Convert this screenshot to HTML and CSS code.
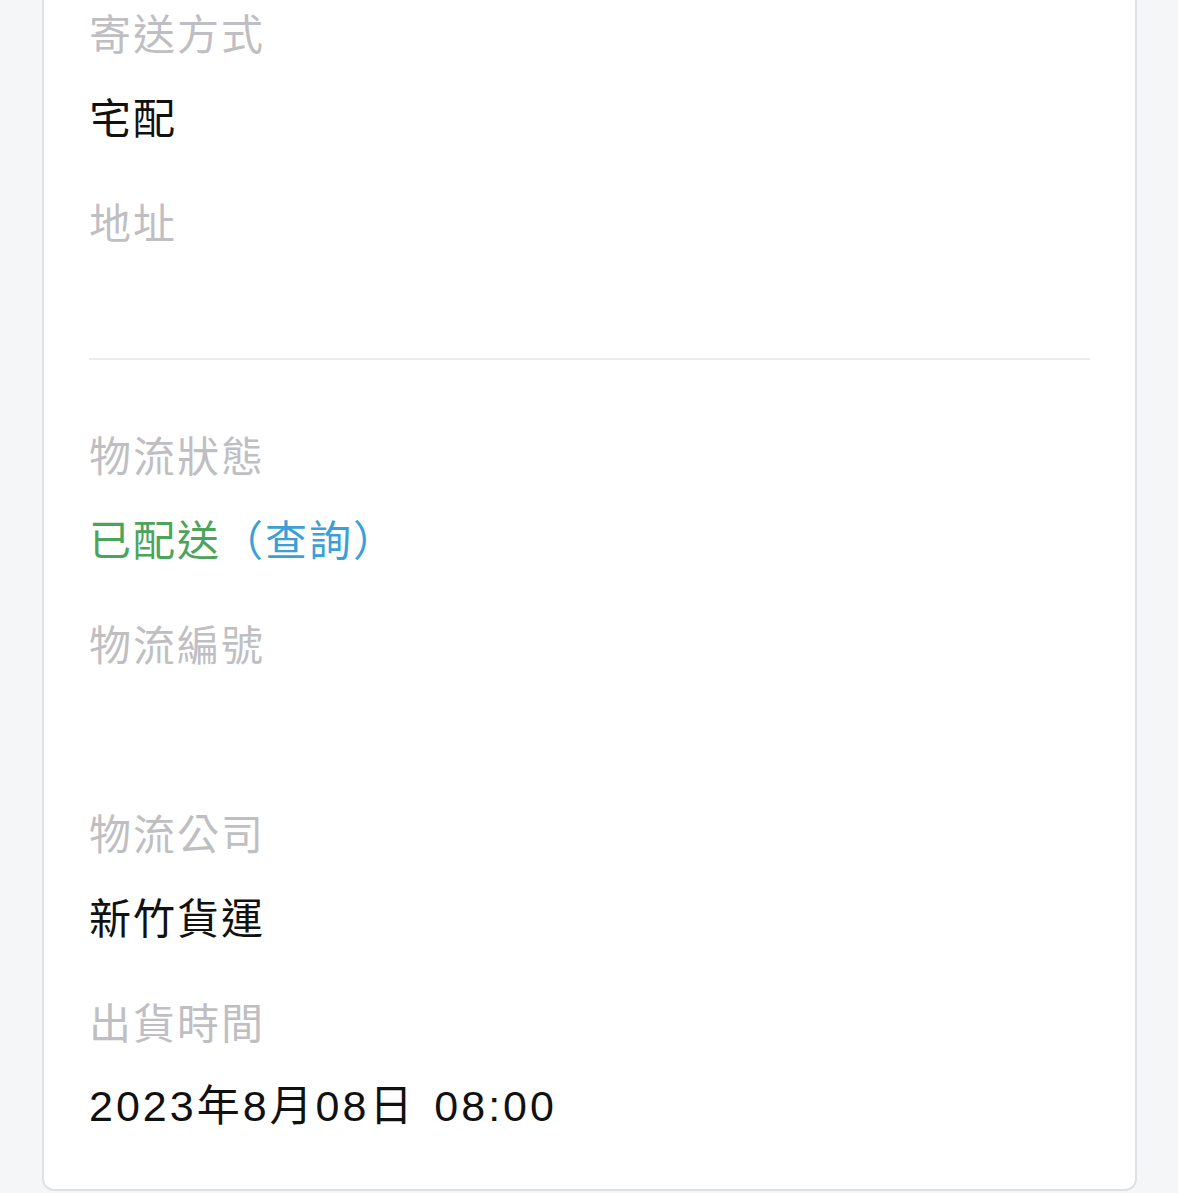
FILE: index.html
```html
<!DOCTYPE html>
<html lang="zh-Hant">
<head>
<meta charset="utf-8">
<title>出貨資訊</title>
<link rel="stylesheet" href="styles.css">
</head>
<body>
<div class="page">
  <div class="card">
    <div class="field">
      <div class="label">寄送方式</div>
      <div class="value">宅配</div>
    </div>
    <div class="field">
      <div class="label">地址</div>
      <div class="value address"><div class="addr-line"></div></div>
    </div>
    <div class="field">
      <div class="label">物流狀態</div>
      <div class="value"><span class="status">已配送</span><a class="query">（查詢）</a></div>
    </div>
    <div class="field">
      <div class="label">物流編號</div>
      <div class="value"></div>
    </div>
    <div class="field">
      <div class="label">物流公司</div>
      <div class="value">新竹貨運</div>
    </div>
    <div class="field">
      <div class="label">出貨時間</div>
      <div class="value date">2023年8月08日 08:00</div>
    </div>
  </div>
</div>
</body>
</html>
```
FILE: styles.css
```css
html, body {
  margin: 0;
  padding: 0;
}
body {
  background: #f5f6f8;
  font-family: "Noto Sans CJK TC", "Noto Sans CJK SC", sans-serif;
  height: 1193px;
  overflow: hidden;
}
.page {
  padding: 0 41px 0 42px;
}
.card {
  background: #ffffff;
  border: 2px solid #e0e1e4;
  border-top: 0;
  border-radius: 0 0 12px 12px;
  padding: 2px 45px 54px;
}
.field + .field {
  margin-top: 45px;
}
.label {
  font-size: 42px;
  line-height: 60px;
  height: 60px;
  letter-spacing: 2px;
  color: #bfbfc3;
}
.value {
  margin-top: 24px;
  font-size: 42px;
  line-height: 60px;
  height: 60px;
  letter-spacing: 2px;
  color: #111111;
}
.value.date {
  font-family: "Liberation Sans", "Noto Sans CJK TC", sans-serif;
  font-size: 43px;
  letter-spacing: 3px;
  word-spacing: 4px;
  position: relative;
  top: 1px;
}
.value.address {
  height: 104px;
}
.addr-line {
  height: 83px;
  border-bottom: 2px solid #ededed;
}
.status {
  color: #4ca45b;
}
.query {
  color: #3c9fd8;
  text-decoration: none;
}
```
